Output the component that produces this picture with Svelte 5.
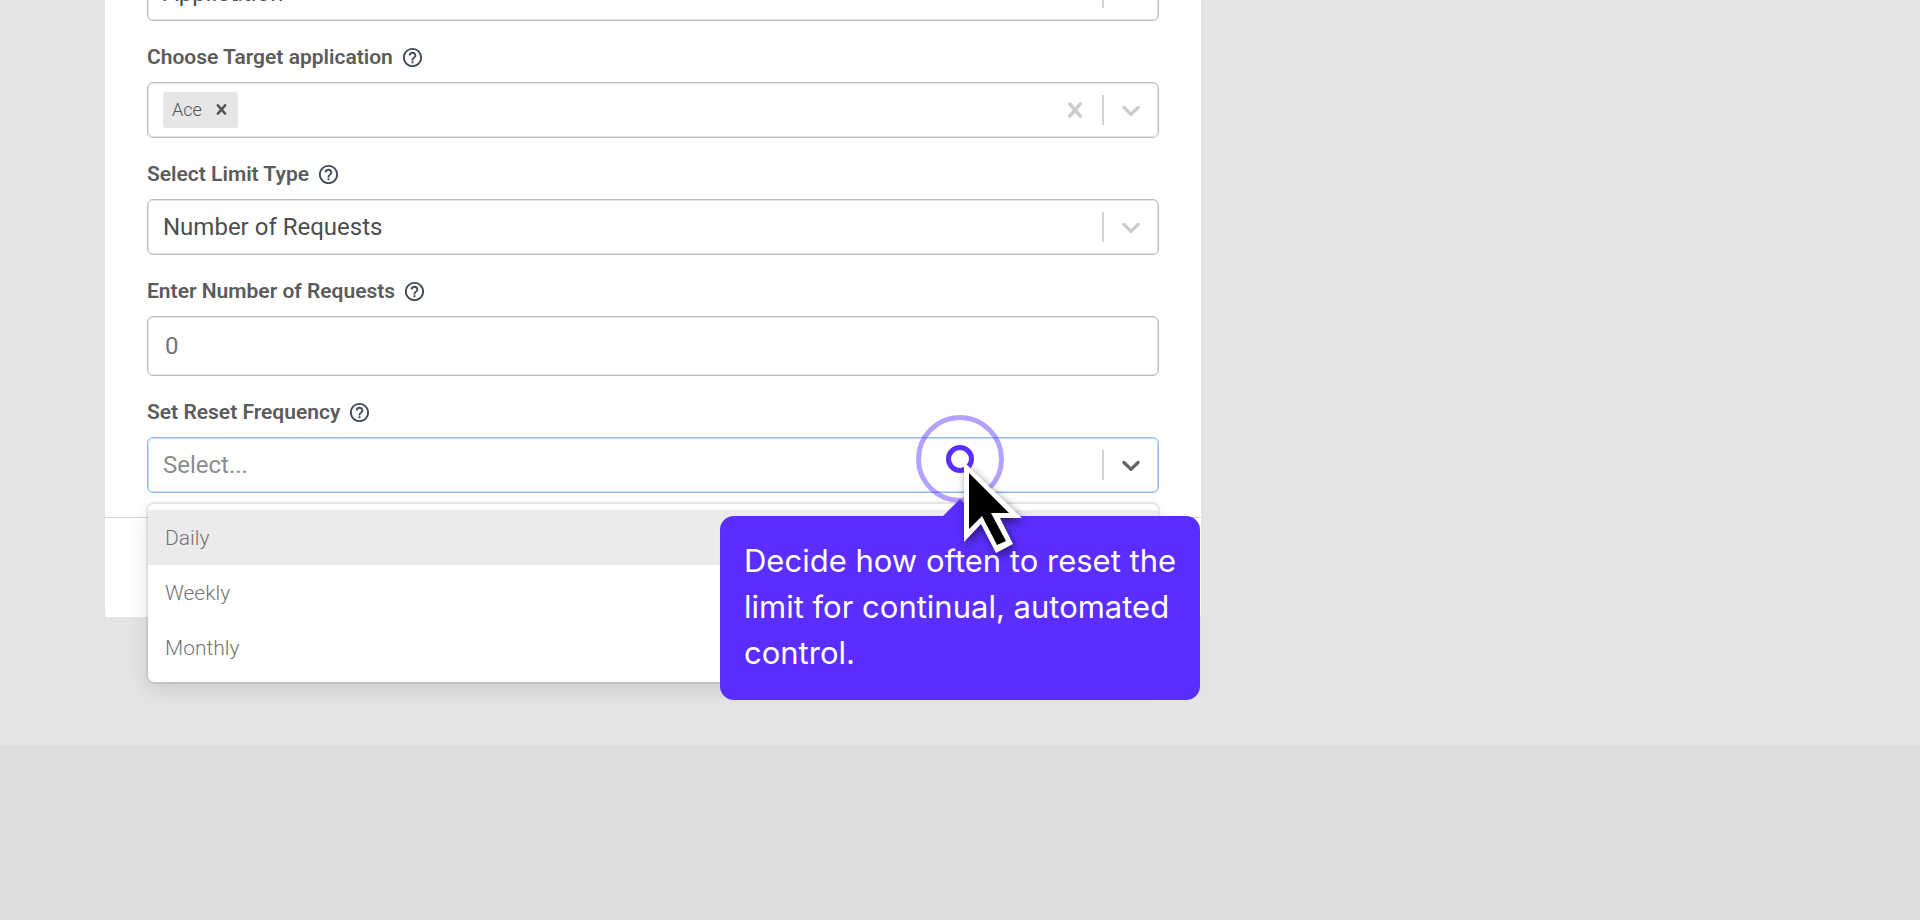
<script lang="ts">
  // Rate limit dialog with the guided-tour hint over the reset field.

  const frequencies = ['Daily', 'Weekly', 'Monthly'];

  let scope = $state('Application');
  let targets = $state(['Ace']);
  let limitType = $state('Number of Requests');
  let requests = $state('0');
  let frequency = $state('');
  let highlighted = $state('Daily');
</script>

{#snippet help()}
  <svg class="help" viewBox="0 0 24 24" aria-hidden="true">
    <path d="M11 18h2v-2h-2v2zm1-16C6.48 2 2 6.48 2 12s4.48 10 10 10 10-4.480 10-10S17.520 2 12 2zm0 18c-4.410 0-8-3.590-8-8s3.590-8 8-8 8 3.590 8 8-3.590 8-8 8zm0-14c-2.210 0-4 1.790-4 4h2c0-1.100.9-2 2-2s2 .9 2 2c0 2-3 1.750-3 5h2c0-2.250 3-2.500 3-5 0-2.210-1.790-4-4-4z" />
  </svg>
{/snippet}

{#snippet cross()}
  <svg viewBox="0 0 20 20" aria-hidden="true">
    <path d="M14.348 14.849c-0.469 0.469-1.229 0.469-1.697 0l-2.651-3.030-2.651 3.029c-0.469 0.469-1.229 0.469-1.697 0-0.469-0.469-0.469-1.229 0-1.697l2.758-3.150-2.759-3.152c-0.469-0.469-0.469-1.228 0-1.697s1.228-0.469 1.697 0l2.652 3.031 2.651-3.031c0.469-0.469 1.228-0.469 1.697 0s0.469 1.229 0 1.697l-2.758 3.152 2.758 3.150c0.469 0.469 0.469 1.229 0 1.698z" />
  </svg>
{/snippet}

{#snippet arrow()}
  <span class="separator"></span>
  <svg class="chevron" viewBox="0 0 20 20" aria-hidden="true">
    <path d="M4.516 7.548c0.436-0.446 1.043-0.481 1.576 0l3.908 3.747 3.908-3.747c0.533-0.481 1.141-0.446 1.574 0 0.436 0.445 0.408 1.197 0 1.615-0.406 0.418-4.695 4.502-4.695 4.502-0.217 0.223-0.502 0.335-0.787 0.335s-0.570-0.112-0.789-0.335c0 0-4.287-4.084-4.695-4.502s-0.436-1.170 0-1.615z" />
  </svg>
{/snippet}

<div class="page">
  <main class="stage">
    <section class="dialog">
      <form class="fields">
        <div class="field">
          <div class="control">
            <select aria-label="Scope" bind:value={scope}>
              <option>Application</option>
            </select>
            {@render arrow()}
          </div>
        </div>

        <div class="field">
          <label for="target">Choose Target application {@render help()}</label>
          <div class="control">
            {#each targets as target}
              <span class="tag">
                {target}
                <button
                  type="button"
                  aria-label="Remove {target}"
                  onclick={() => (targets = targets.filter((t) => t !== target))}
                >
                  {@render cross()}
                </button>
              </span>
            {/each}
            <input id="target" type="text" autocomplete="off" />
            <button class="clear" type="button" aria-label="Clear all" onclick={() => (targets = [])}>
              {@render cross()}
            </button>
            {@render arrow()}
          </div>
        </div>

        <div class="field">
          <label for="limit-type">Select Limit Type {@render help()}</label>
          <div class="control">
            <select id="limit-type" bind:value={limitType}>
              <option>Number of Requests</option>
            </select>
            {@render arrow()}
          </div>
        </div>

        <div class="field">
          <label for="requests">Enter Number of Requests {@render help()}</label>
          <div class="control number">
            <input id="requests" type="text" inputmode="numeric" bind:value={requests} />
          </div>
        </div>

        <div class="field">
          <label for="frequency">Set Reset Frequency {@render help()}</label>
          <div class="control focused">
            <select id="frequency" class:empty={!frequency} bind:value={frequency}>
              <option value="">Select...</option>
              {#each frequencies as name}
                <option>{name}</option>
              {/each}
            </select>
            {@render arrow()}

            <div class="menu">
              {#each frequencies as name}
                <button
                  type="button"
                  class:highlighted={highlighted === name}
                  onmouseenter={() => (highlighted = name)}
                  onclick={() => (frequency = name)}
                >
                  {name}
                </button>
              {/each}
            </div>

            <div class="hint">
              <span class="pulse"></span>
              <p>Decide how often to reset the limit for continual, automated control.</p>
              <svg class="pointer" viewBox="0 0 70 94" aria-hidden="true">
                <path class="outline" d="M4 3 L62 59 L40 59 L53 85 L36 94 L21 65 L4 83 Z" />
                <path d="M9 14 L49 54 L31 54 L46 82 L37 86 L22 57 L9 70 Z" />
              </svg>
            </div>
          </div>
        </div>
      </form>
      <footer></footer>
    </section>
  </main>
</div>

<style>
  :global(body) {
    background: #dedede;
  }

  .page {
    min-height: 100vh;
    overflow: hidden;
    background: #dedede;
    font-family: Roboto, 'Liberation Sans', sans-serif;
    color: #555;
  }

  .stage {
    padding: 0 105px 128px;
    background: #e4e4e4;
  }

  .dialog {
    display: flow-root;
    max-width: 1096px;
    border-radius: 0 0 3px 3px;
    background: #fff;
  }

  /* The form is scrolled, so its first control starts above the fold. */
  .fields {
    margin-top: -35px;
    padding: 0 42px 24px;
  }

  footer {
    height: 99px;
    border-top: 1px solid #d4d4d4;
  }

  label {
    display: flex;
    align-items: center;
    gap: 8px;
    height: 24px;
    padding: 24px 0 13px;
    font-size: 21px;
    font-weight: 600;
    line-height: 24px;
    color: #5c5c5c;
  }

  .help {
    width: 23px;
    height: 23px;
    fill: #444a5c;
  }

  .control {
    position: relative;
    display: flex;
    align-items: center;
    box-sizing: border-box;
    height: 56px;
    padding-left: 15px;
    border: 1px solid #bdbdbd;
    border-radius: 6px;
    box-shadow: inset 0 0 0 1px #e4e4e4;
    background: #fff;
  }
  .control.number {
    height: 60px;
    padding-left: 17px;
  }
  .control.focused {
    border-color: #8fbcf5;
    box-shadow: inset 0 0 0 1px #c4dcfa;
  }

  select,
  input {
    flex: 1;
    min-width: 0;
    height: 100%;
    padding: 0;
    border: 0;
    outline: 0;
    appearance: none;
    background: none;
    font: 24px/28px Roboto, 'Liberation Sans', sans-serif;
    color: #4d4d4d;
  }
  .number input {
    color: #757575;
  }
  select.empty {
    color: #8c8c8c;
  }

  button {
    border: 0;
    background: none;
    font: inherit;
    color: inherit;
    cursor: pointer;
  }
  button svg {
    display: block;
    fill: currentColor;
  }

  .tag {
    display: flex;
    align-items: center;
    gap: 4px;
    box-sizing: border-box;
    height: 36px;
    padding: 0 0 2px 9px;
    border-radius: 3px;
    background: #e6e6e6;
    font-size: 18px;
    font-weight: 300;
    color: #555;
  }
  .tag button {
    padding: 0 6px 0 5px;
  }
  .tag svg {
    width: 21px;
    height: 21px;
  }

  .clear {
    padding: 12px;
    color: #ccc;
  }
  .clear svg,
  .chevron {
    width: 30px;
    height: 30px;
  }

  .separator {
    width: 2px;
    height: 30px;
    background: #d2d2d2;
  }
  .chevron {
    margin: 0 12px;
    fill: #ccc;
    pointer-events: none;
  }
  .focused .chevron {
    fill: #666;
  }

  .menu {
    position: absolute;
    top: calc(100% + 12px);
    left: 0;
    right: 0;
    padding: 6px 0 7px;
    border-radius: 6px;
    background: #fff;
    box-shadow:
      0 0 0 2px rgba(0, 0, 0, 0.08),
      0 6px 20px rgba(0, 0, 0, 0.12);
  }
  .menu button {
    display: block;
    width: 100%;
    height: 55px;
    padding: 0 17px;
    text-align: left;
    font-size: 21px;
    font-weight: 300;
    color: #747474;
  }
  .menu button.highlighted {
    background: #ebebeb;
  }

  /* Tour hint, anchored to a spot inside the select. */
  .hint {
    position: absolute;
    top: 21px;
    right: 198px;
    width: 0;
    height: 0;
  }

  .pulse {
    position: absolute;
    top: -44px;
    left: -44px;
    box-sizing: border-box;
    width: 88px;
    height: 88px;
    border: 5px solid rgba(91, 46, 255, 0.45);
    border-radius: 50%;
  }
  .pulse::after {
    content: '';
    position: absolute;
    inset: 25px;
    border: 5px solid #5b2eff;
    border-radius: 50%;
  }

  .hint p {
    position: absolute;
    top: 57px;
    left: -240px;
    box-sizing: border-box;
    width: 480px;
    margin: 0;
    padding: 22px 20px 24px 24px;
    border-radius: 14px;
    background: #5b2eff;
    font: 31px/46px Inter, sans-serif;
    color: #fff;
  }
  .hint p::before {
    content: '';
    position: absolute;
    top: -17px;
    left: 223px;
    border: 17px solid transparent;
    border-top: 0;
    border-bottom-color: #5b2eff;
  }

  .pointer {
    position: absolute;
    top: 0;
    left: 0;
    width: 70px;
    height: 94px;
    overflow: visible;
    filter: drop-shadow(2px 4px 4px rgba(0, 0, 0, 0.5));
  }
  .pointer .outline {
    fill: #fff;
  }
</style>
